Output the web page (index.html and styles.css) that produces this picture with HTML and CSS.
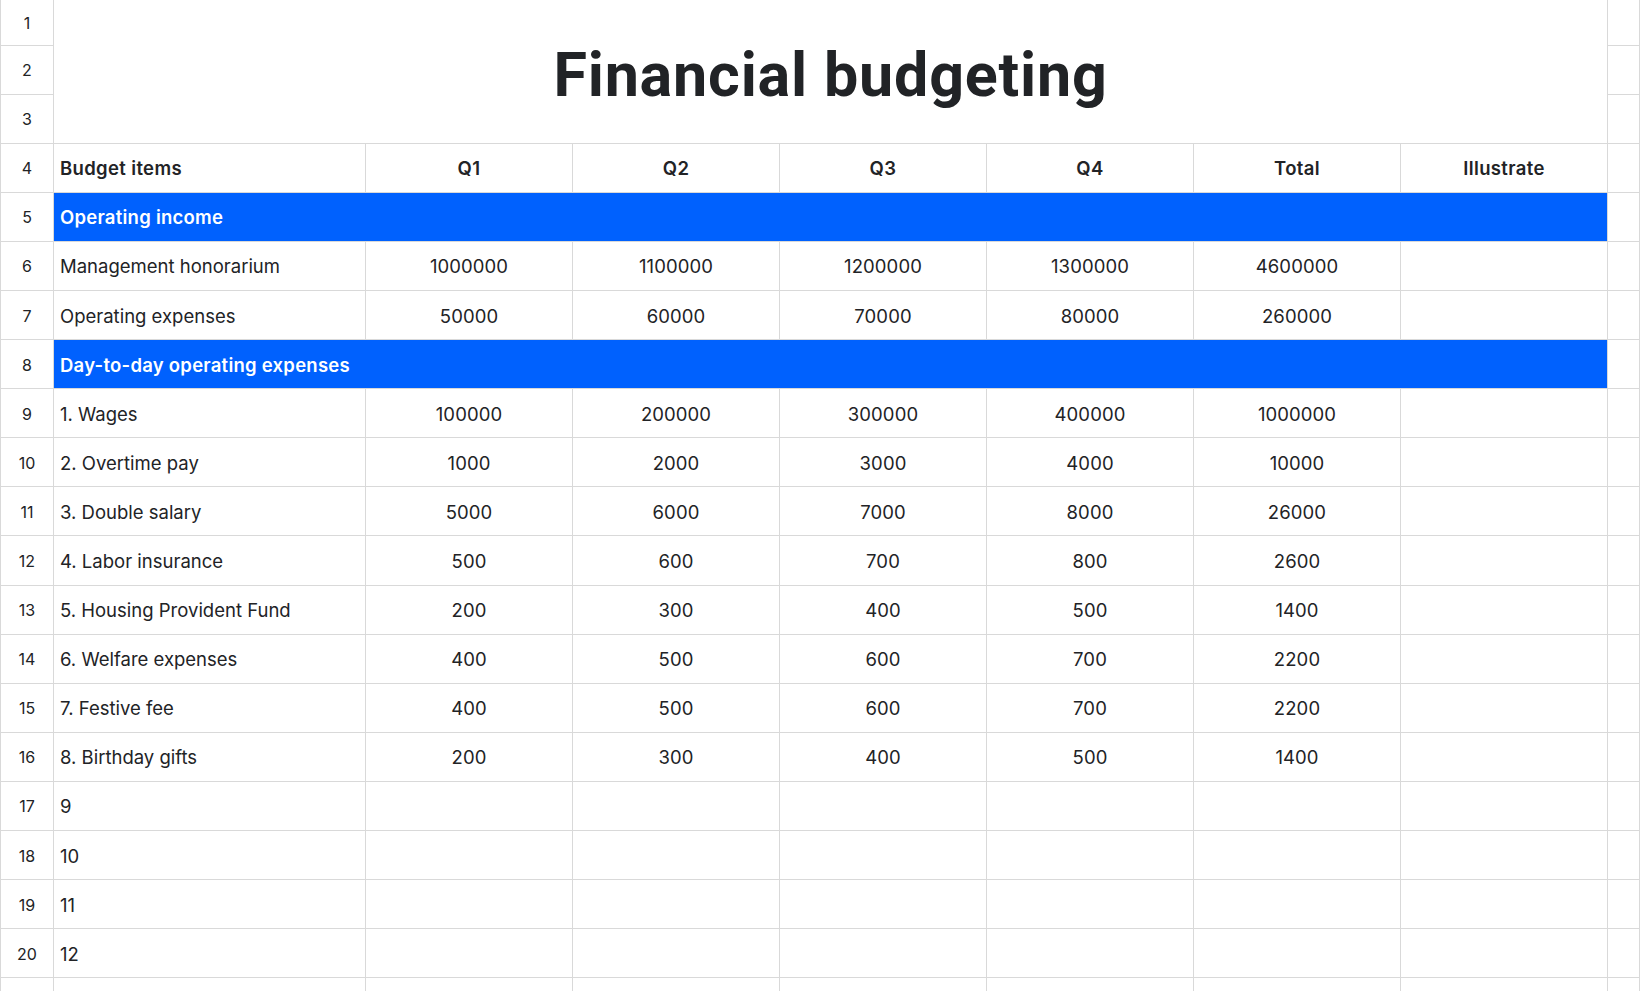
FILE: index.html
```html
<!DOCTYPE html>
<html>
<head>
<meta charset="utf-8">
<title>Financial budgeting</title>
<link rel="stylesheet" href="styles.css">
</head>
<body>
<div class="sheet">
  <div class="title">Financial budgeting</div>
  <div class="rn">1</div><div class="x"></div>
  <div class="rn">2</div><div class="x"></div>
  <div class="rn">3</div><div class="x"></div>

  <div class="rn">4</div>
  <div class="c l h">Budget items</div>
  <div class="c h">Q1</div><div class="c h">Q2</div><div class="c h">Q3</div><div class="c h">Q4</div><div class="c h">Total</div><div class="c h">Illustrate</div>
  <div class="x"></div>

  <div class="rn">5</div>
  <div class="band">Operating income</div>
  <div class="x"></div>

  <div class="rn">6</div>
  <div class="c l">Management honorarium</div>
  <div class="c">1000000</div><div class="c">1100000</div><div class="c">1200000</div><div class="c">1300000</div><div class="c">4600000</div><div class="c"></div>
  <div class="x"></div>

  <div class="rn">7</div>
  <div class="c l">Operating expenses</div>
  <div class="c">50000</div><div class="c">60000</div><div class="c">70000</div><div class="c">80000</div><div class="c">260000</div><div class="c"></div>
  <div class="x"></div>

  <div class="rn">8</div>
  <div class="band">Day-to-day operating expenses</div>
  <div class="x"></div>

  <div class="rn">9</div>
  <div class="c l">1. Wages</div>
  <div class="c">100000</div><div class="c">200000</div><div class="c">300000</div><div class="c">400000</div><div class="c">1000000</div><div class="c"></div>
  <div class="x"></div>

  <div class="rn">10</div>
  <div class="c l">2. Overtime pay</div>
  <div class="c">1000</div><div class="c">2000</div><div class="c">3000</div><div class="c">4000</div><div class="c">10000</div><div class="c"></div>
  <div class="x"></div>

  <div class="rn">11</div>
  <div class="c l">3. Double salary</div>
  <div class="c">5000</div><div class="c">6000</div><div class="c">7000</div><div class="c">8000</div><div class="c">26000</div><div class="c"></div>
  <div class="x"></div>

  <div class="rn">12</div>
  <div class="c l">4. Labor insurance</div>
  <div class="c">500</div><div class="c">600</div><div class="c">700</div><div class="c">800</div><div class="c">2600</div><div class="c"></div>
  <div class="x"></div>

  <div class="rn">13</div>
  <div class="c l">5. Housing Provident Fund</div>
  <div class="c">200</div><div class="c">300</div><div class="c">400</div><div class="c">500</div><div class="c">1400</div><div class="c"></div>
  <div class="x"></div>

  <div class="rn">14</div>
  <div class="c l">6. Welfare expenses</div>
  <div class="c">400</div><div class="c">500</div><div class="c">600</div><div class="c">700</div><div class="c">2200</div><div class="c"></div>
  <div class="x"></div>

  <div class="rn">15</div>
  <div class="c l">7. Festive fee</div>
  <div class="c">400</div><div class="c">500</div><div class="c">600</div><div class="c">700</div><div class="c">2200</div><div class="c"></div>
  <div class="x"></div>

  <div class="rn">16</div>
  <div class="c l">8. Birthday gifts</div>
  <div class="c">200</div><div class="c">300</div><div class="c">400</div><div class="c">500</div><div class="c">1400</div><div class="c"></div>
  <div class="x"></div>

  <div class="rn">17</div>
  <div class="c l">9</div>
  <div class="c"></div><div class="c"></div><div class="c"></div><div class="c"></div><div class="c"></div><div class="c"></div>
  <div class="x"></div>

  <div class="rn">18</div>
  <div class="c l">10</div>
  <div class="c"></div><div class="c"></div><div class="c"></div><div class="c"></div><div class="c"></div><div class="c"></div>
  <div class="x"></div>

  <div class="rn">19</div>
  <div class="c l">11</div>
  <div class="c"></div><div class="c"></div><div class="c"></div><div class="c"></div><div class="c"></div><div class="c"></div>
  <div class="x"></div>

  <div class="rn">20</div>
  <div class="c l">12</div>
  <div class="c"></div><div class="c"></div><div class="c"></div><div class="c"></div><div class="c"></div><div class="c"></div>
  <div class="x"></div>

  <div class="rn"></div>
  <div class="c l"></div>
  <div class="c"></div><div class="c"></div><div class="c"></div><div class="c"></div><div class="c"></div><div class="c"></div>
  <div class="x"></div>
</div>
</body>
</html>
```

FILE: styles.css
```css
html, body {
  margin: 0;
  padding: 0;
  background: #ffffff;
  overflow: hidden;
}

body {
  width: 1640px;
  height: 991px;
  font-family: Inter, "Noto Sans", sans-serif;
  color: #222326;
}

.sheet {
  display: grid;
  grid-template-columns: 54px 312px repeat(6, 207px) 1fr;
  grid-template-rows: 45.5px repeat(20, 49.1px);
  grid-auto-rows: 49px;
}

.sheet > div {
  box-sizing: border-box;
  border-right: 1px solid #d9d9d9;
  border-bottom: 1px solid #d9d9d9;
  display: flex;
  align-items: center;
  min-width: 0;
  white-space: nowrap;
  padding-top: 1px;
}

.rn {
  border-left: 1px solid #d9d9d9;
  justify-content: center;
  font-size: 16px;
  color: #222326;
}

.title {
  grid-column: 2 / 9;
  grid-row: 1 / 4;
  justify-content: center;
  font-family: Roboto, "Noto Sans", sans-serif;
  font-weight: 700;
  font-size: 61px;
  letter-spacing: 0.8px;
  color: #212326;
}

.sheet > .title {
  padding-top: 8px;
}

.c {
  justify-content: center;
  font-size: 18.5px;
  letter-spacing: 0.1px;
}

.c.l {
  justify-content: flex-start;
  padding-left: 6px;
  letter-spacing: 0;
}

.c.h {
  font-weight: 600;
  letter-spacing: 0.35px;
}

.band {
  grid-column: 2 / 9;
  background: #0061fe;
  color: #ffffff;
  font-size: 18.5px;
  font-weight: 600;
  letter-spacing: 0.25px;
  padding-left: 6px;
}
```
